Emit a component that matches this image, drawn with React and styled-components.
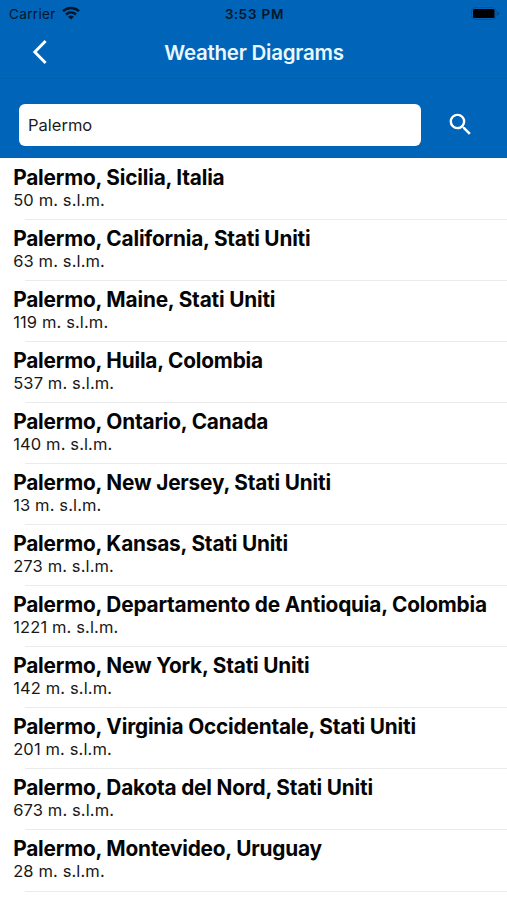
import React, { useState } from 'react';
import styled, { createGlobalStyle } from 'styled-components';

const GlobalStyle = createGlobalStyle`
  * {
    box-sizing: border-box;
  }
  body {
    margin: 0;
    background: #fff;
    color: #050505;
    font-family: Inter, 'Liberation Sans', sans-serif;
  }
`;

const Screen = styled.div`
  display: flex;
  flex-direction: column;
  height: 900px;
  overflow: hidden;
`;

const Header = styled.header`
  height: 158px;
  flex: none;
  background: #0065b8;
`;

const StatusBar = styled.div`
  display: grid;
  grid-template-columns: 1fr auto 1fr;
  align-items: center;
  height: 27px;
  padding: 0 7px 0 9px;
  color: #03152a;
  line-height: 18px;
`;

const Carrier = styled.div`
  display: flex;
  align-items: center;
  gap: 6px;
  font-size: 13.5px;
  letter-spacing: 0.35px;

  svg {
    margin-bottom: 1px;
  }
`;

const Clock = styled.div`
  font-size: 13.5px;
  font-weight: 600;
  letter-spacing: 0.65px;
  font-variant-numeric: tabular-nums;
`;

const Battery = styled.svg`
  justify-self: end;
`;

const NavBar = styled.div`
  display: grid;
  grid-template-columns: 80px 1fr 80px;
  align-items: center;
  height: 52px;
  border-bottom: 1px solid #0061b1;
`;

const IconButton = styled.button`
  display: flex;
  align-items: center;
  justify-content: center;
  width: 100%;
  height: 100%;
  padding: 0;
  border: 0;
  background: none;
  color: #fff;
`;

const BackButton = styled(IconButton)`
  padding-bottom: 2px;
`;

const Title = styled.h1`
  margin: 0;
  padding-left: 1px;
  color: #e9f7ff;
  font-size: 20.5px;
  font-weight: 600;
  line-height: 24px;
  text-align: center;
  white-space: nowrap;
  letter-spacing: -0.25px;
`;

const SearchBar = styled.div`
  display: grid;
  grid-template-columns: 402px 1fr;
  height: 67px;
  margin-top: 25px;
  padding-left: 19px;
`;

const SearchInput = styled.input`
  height: 42px;
  padding: 0 9px;
  border: 0;
  border-radius: 6px;
  outline: none;
  background: #fff;
  color: #1c1c1c;
  font: 400 16.5px Inter, 'Liberation Sans', sans-serif;
`;

const SearchButton = styled(IconButton)`
  height: 40px;
  padding-right: 7px;
`;

const List = styled.ul`
  margin: 0;
  padding: 0.6px 0 0;
  list-style: none;
`;

const Row = styled.li`
  display: flex;
  flex-direction: column;
  height: 61.08px;
  padding: 7px 0 0 13.2px;
  white-space: nowrap;

  &::after {
    content: '';
    height: 1px;
    margin: auto 0 0 12px;
    background: #ebebeb;
  }
`;

const Place = styled.div`
  font-size: 20.8px;
  font-weight: 650;
  line-height: 24px;
  letter-spacing: -0.19px;
`;

const Altitude = styled.div`
  color: #181818;
  font-size: 16.5px;
  line-height: 20px;
  letter-spacing: 0.12px;
`;

const places = [
  { name: 'Palermo, Sicilia, Italia', altitude: 50 },
  { name: 'Palermo, California, Stati Uniti', altitude: 63 },
  { name: 'Palermo, Maine, Stati Uniti', altitude: 119 },
  { name: 'Palermo, Huila, Colombia', altitude: 537 },
  { name: 'Palermo, Ontario, Canada', altitude: 140 },
  { name: 'Palermo, New Jersey, Stati Uniti', altitude: 13 },
  { name: 'Palermo, Kansas, Stati Uniti', altitude: 273 },
  { name: 'Palermo, Departamento de Antioquia, Colombia', altitude: 1221 },
  { name: 'Palermo, New York, Stati Uniti', altitude: 142 },
  { name: 'Palermo, Virginia Occidentale, Stati Uniti', altitude: 201 },
  { name: 'Palermo, Dakota del Nord, Stati Uniti', altitude: 673 },
  { name: 'Palermo, Montevideo, Uruguay', altitude: 28 },
];

const WifiIcon = () => (
  <svg width="18" height="14" viewBox="0 0 18 14" fill="none" stroke="currentColor" strokeWidth="2.5">
    <path d="M1 5.2C5.5 0.9 12.5 0.9 17 5.2" />
    <path d="M4 8.5C6.9 5.8 11.1 5.8 14 8.5" />
    <path d="M9 13.6L6.1 10.7C7.8 9.2 10.2 9.2 11.9 10.7Z" fill="currentColor" stroke="none" />
  </svg>
);

const App = () => {
  const [query, setQuery] = useState('Palermo');

  return (
    <Screen>
      <GlobalStyle />
      <Header>
        <StatusBar>
          <Carrier>
            Carrier
            <WifiIcon />
          </Carrier>
          <Clock>3:53 PM</Clock>
          <Battery width="29" height="14" viewBox="0 0 29 14">
            <rect x="0.5" y="0.5" width="24.5" height="12" rx="3.5" fill="none" stroke="#034f91" />
            <rect x="2" y="2" width="21.5" height="9" rx="1.5" fill="#000" />
            <path d="M26.5 4.5v4q1.7-.5 1.7-2t-1.7-2z" fill="#034482" />
          </Battery>
        </StatusBar>
        <NavBar>
          <BackButton aria-label="Back">
            <svg width="16" height="26" viewBox="0 0 16 26" fill="none" stroke="currentColor" strokeWidth="2.9">
              <path d="M13.6 2L2.8 13L13.6 24" />
            </svg>
          </BackButton>
          <Title>Weather Diagrams</Title>
        </NavBar>
        <SearchBar>
          <SearchInput value={query} onChange={e => setQuery(e.target.value)} />
          <SearchButton aria-label="Search">
            <svg width="29" height="29" viewBox="0 0 24 24" fill="currentColor">
              <path d="M15.5 14h-.79l-.28-.27A6.47 6.47 0 0 0 16 9.5 6.5 6.5 0 1 0 9.5 16c1.61 0 3.09-.59 4.23-1.57l.27.28v.79l5 4.99L20.49 19l-4.99-5zm-6 0C7.01 14 5 11.99 5 9.5S7.01 5 9.5 5 14 7.01 14 9.5 11.99 14 9.5 14z" />
            </svg>
          </SearchButton>
        </SearchBar>
      </Header>
      <List>
        {places.map(place => (
          <Row key={place.name}>
            <Place>{place.name}</Place>
            <Altitude>{place.altitude} m. s.l.m.</Altitude>
          </Row>
        ))}
      </List>
    </Screen>
  );
};

export default App;
